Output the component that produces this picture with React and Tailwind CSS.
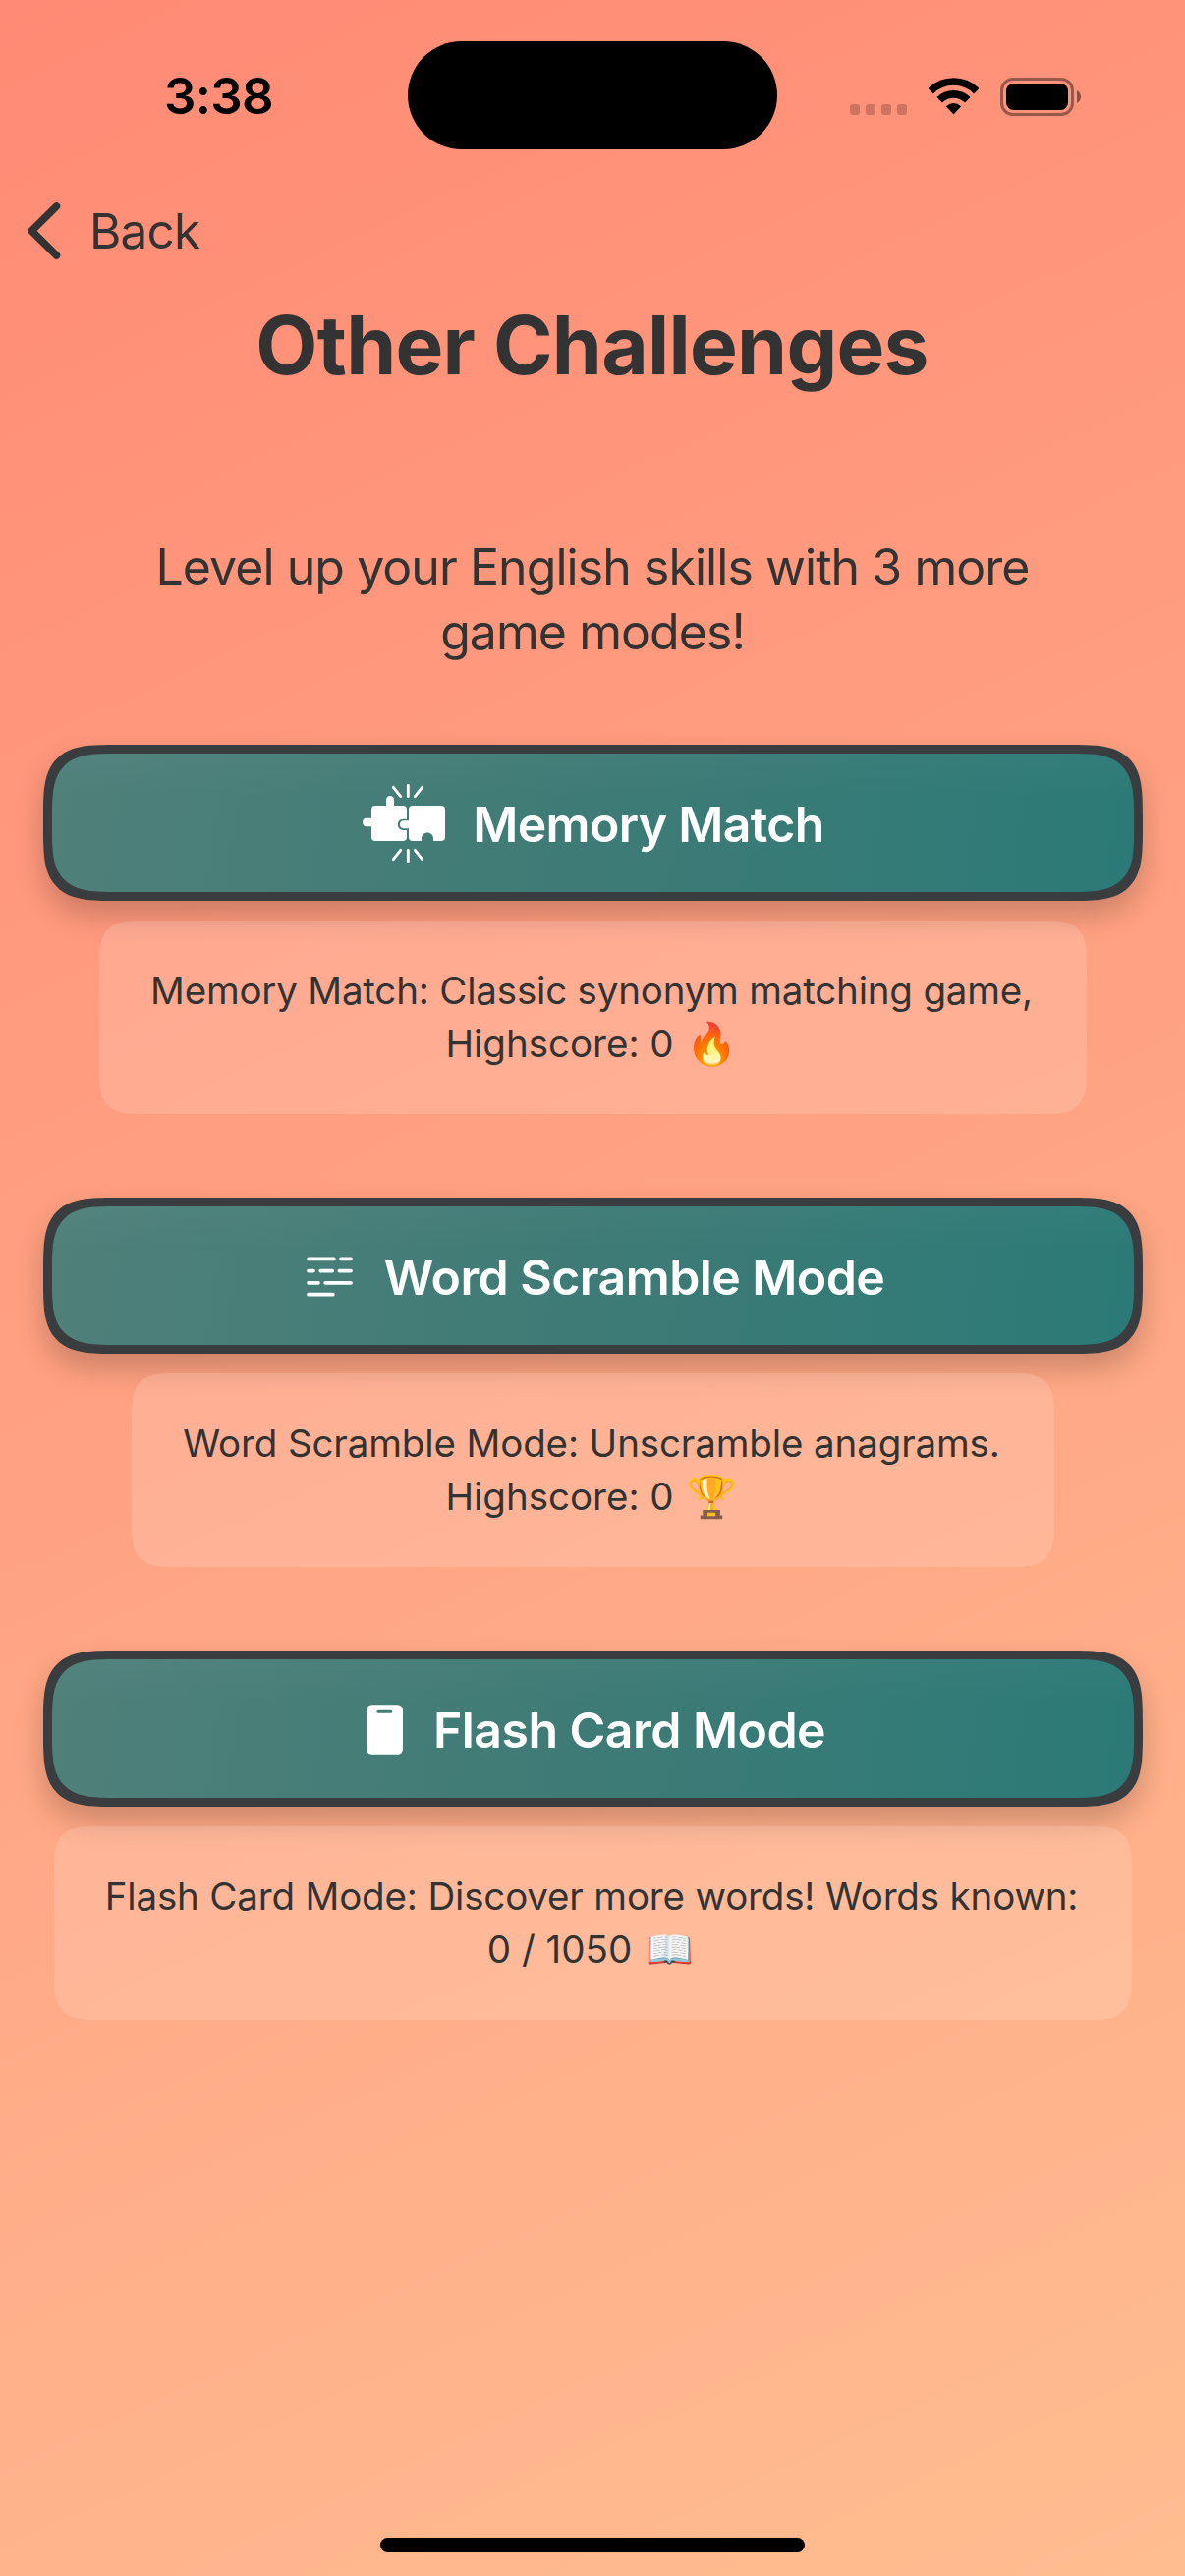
function PuzzleIcon() {
  return (
    <svg viewBox="90 54 252 240" className="mr-[28px] ml-[2px] h-[80px] w-[84px] shrink-0">
      <g stroke="#fff" strokeWidth="8.5" strokeLinecap="round">
        <path d="M229 58V92M184 64L206 92M272 64L250 92M229 256V290M206 256L184 284M250 256L272 284" />
      </g>
      <path
        fill="#fff"
        d="M129 120H162V102C162 86 186 86 186 102V120H213Q225 120 225 132V161H214C192 161 192 195 214 195H225V216Q225 228 213 228H129Q117 228 117 216V184H102C86 184 86 158 102 158H117V132Q117 120 129 120Z"
      />
      <path
        fill="#fff"
        d="M243 120H330Q342 120 342 132V216Q342 228 330 228H306V221C306 196 270 196 270 221V228H243Q231 228 231 216V190H216C200 190 200 166 216 166H231V132Q231 120 243 120Z"
      />
    </svg>
  );
}

function WordLinesIcon() {
  return (
    <svg viewBox="63 87 142 124" className="mr-[32px] ml-[6px] mt-[2px] h-[41px] w-[47px] shrink-0">
      <path
        d="M69 94H147M169 94H199M69 131H84M106 131H142M164 131H199M69 168H99M121 168H199M69 204H144"
        stroke="#fff"
        strokeWidth="11.5"
        strokeLinecap="round"
      />
    </svg>
  );
}

function CardIcon() {
  return (
    <svg viewBox="69 76 111 152" className="mr-[31px] ml-[7px] mt-[2px] h-[51px] w-[37px] shrink-0">
      <rect x="69" y="76" width="111" height="152" rx="17" fill="#fff" />
      <path d="M105 97H143" stroke="#437c76" strokeWidth="9" strokeLinecap="round" />
    </svg>
  );
}

const modes = [
  {
    name: "Memory Match",
    Icon: PuzzleIcon,
    titleClass: "tracking-[-0.67px]",
    boxClass: "w-[1005px]",
    first: "Memory Match: Classic synonym matching game,",
    firstClass: "tracking-[-0.19px]",
    second: "Highscore: 0",
    emoji: "🔥",
    emojiClass: "text-[42px]",
  },
  {
    name: "Word Scramble Mode",
    Icon: WordLinesIcon,
    titleClass: "tracking-[-0.57px]",
    boxClass: "w-[939px]",
    first: "Word Scramble Mode: Unscramble anagrams.",
    firstClass: "tracking-[-0.12px]",
    second: "Highscore: 0",
    emoji: "🏆",
    emojiClass: "text-[42px]",
  },
  {
    name: "Flash Card Mode",
    Icon: CardIcon,
    titleClass: "tracking-[-0.54px]",
    boxClass: "w-[1097px]",
    first: "Flash Card Mode: Discover more words! Words known:",
    firstClass: "tracking-[-0.16px]",
    second: "0 / 1050",
    emoji: "📖",
    emojiClass: "text-[39px]",
  },
];

function StatusBar() {
  return (
    <div className="flex h-[194px] items-start text-black">
      <div className="flex h-[196px] w-[415px] items-center pl-[167px] text-[51px] font-semibold tracking-[-0.7px]">
        3:38
      </div>
      <div className="mt-[42px] h-[110px] w-[376px] rounded-full bg-black" />
      <div className="flex h-[196px] items-center pl-[74px]">
        <div className="mt-[26px] flex gap-[6px]">
          {[0, 1, 2, 3].map((i) => (
            <span key={i} className="h-[11px] w-[10px] rounded-[3px] bg-black/20" />
          ))}
        </div>
        <svg viewBox="0 0 51 38" className="ml-[22px] h-[38px] w-[51px]">
          <g fill="none" stroke="#000">
            <path d="M2.2 13.7A33 33 0 0 1 48.8 13.7" strokeWidth="7.6" />
            <path d="M11.2 22.7A20.3 20.3 0 0 1 39.8 22.7" strokeWidth="7.8" />
          </g>
          <path d="M25.5 37.5L17.8 29.3Q25.5 22.9 33.2 29.3Z" />
        </svg>
        <svg viewBox="0 0 82 39" className="ml-[22px] h-[39px] w-[82px]">
          <rect x="1.5" y="1.5" width="72" height="36" rx="11.5" fill="none" stroke="#000" strokeOpacity="0.4" strokeWidth="3" />
          <rect x="6" y="6" width="63" height="27" rx="7.5" />
          <path d="M78 13Q82 15.5 82 19.5T78 26Z" opacity="0.45" />
        </svg>
      </div>
    </div>
  );
}

function Mode({ name, Icon, titleClass, boxClass, first, firstClass, second, emoji, emojiClass }) {
  return (
    <section className="flex flex-col items-center">
      <button className="flex h-[159px] w-[1119px] items-center justify-center rounded-[73px] border-[9px] border-[#393d40] bg-[linear-gradient(180deg,rgba(255,255,255,0.03)_0%,rgba(255,255,255,0)_35%),linear-gradient(97.7deg,#50807a_0%,#3f7b76_48%,#2b7a77_100%)] [background-origin:border-box] shadow-[0_15px_30px_rgba(0,0,0,0.2)] [corner-shape:superellipse(1.7)]">
        <Icon />
        <span className={`pt-[2px] text-[50px] leading-[60px] font-semibold whitespace-nowrap text-white ${titleClass}`}>
          {name}
        </span>
      </button>
      <div
        className={`mt-[20px] flex h-[197px] flex-col items-center justify-center rounded-[46px] bg-white/15 pr-[2px] pb-[2px] text-[38.5px] leading-[54px] whitespace-nowrap [corner-shape:superellipse(1.7)] ${boxClass}`}
      >
        <p className={firstClass}>{first}</p>
        <p className="flex h-[54px] items-center">
          <span>{second}</span>
          <span className={`ml-[11px] flex w-[54px] justify-center leading-[54px] ${emojiClass}`}>{emoji}</span>
        </p>
      </div>
    </section>
  );
}

export default function App() {
  return (
    <main className="flex h-[2622px] w-[1206px] flex-col overflow-hidden bg-[linear-gradient(155.3deg,#ff8a75_0%,#ffbd90_100%)] font-[Inter,sans-serif] text-[#333333]">
      <StatusBar />
      <nav className="flex h-[82px] items-center pl-[28px]">
        <svg viewBox="0 0 34 58" className="h-[58px] w-[34px]">
          <path d="M29.5 4L4.2 29L29.5 54" fill="none" stroke="#333333" strokeWidth="7.6" strokeLinecap="round" strokeLinejoin="round" />
        </svg>
        <span className="ml-[29px] text-[49.5px] tracking-[-0.8px]">Back</span>
      </nav>
      <h1 className="h-[151px] pr-[1px] text-center text-[82px] leading-[151px] font-bold tracking-[-0.74px]">Other Challenges</h1>
      <p className="mt-[117px] text-center text-[50px] leading-[66px] tracking-[-0.94px]">
        Level up your English skills with 3 more
        <br />
        game modes!
      </p>
      <div className="mt-[82px] flex flex-col gap-[85px]">
        {modes.map((mode) => (
          <Mode key={mode.name} {...mode} />
        ))}
      </div>
      <div className="mt-auto mb-[24px] h-[15px] w-[432px] self-center rounded-full bg-black" />
    </main>
  );
}
